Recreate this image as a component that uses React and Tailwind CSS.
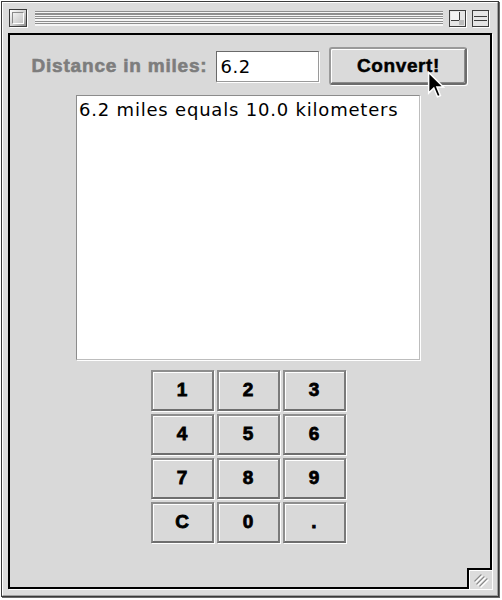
import React, { useState } from "react";

const bold = { fontFamily: '"Liberation Sans", Arial, sans-serif' };

function CloseBox() {
  return (
    <div className="shrink-0 w-[18px] h-[18px] border border-[#3c3c3c] bg-[linear-gradient(135deg,#ffffff,#cfcfcf_55%,#8f8f8f)] shadow-[1px_1px_0_#ffffff] p-[2px]">
      <div className="w-full h-full border border-t-[#8a8a8a] border-l-[#8a8a8a] border-r-white border-b-white bg-[linear-gradient(135deg,#f2f2f2,#c4c4c4)]" />
    </div>
  );
}

function ZoomBox() {
  return (
    <div className="shrink-0 w-[17px] h-[17px] border border-[#3c3c3c] bg-[#e6e6e6] shadow-[1px_1px_0_#ffffff] relative">
      <div className="absolute left-[1px] top-[1px] w-[9px] h-[9px] border-r border-b border-[#3c3c3c] bg-[#f4f4f4]" />
      <div className="absolute right-[1px] bottom-[1px] w-[5px] h-[5px] bg-[#bcbcbc]" />
    </div>
  );
}

function CollapseBox() {
  return (
    <div className="shrink-0 w-[17px] h-[17px] border border-[#3c3c3c] bg-[#e6e6e6] shadow-[1px_1px_0_#ffffff] flex flex-col justify-center gap-[3px] px-[1px]">
      <div className="h-[1px] bg-[#3c3c3c]" />
      <div className="h-[1px] bg-[#3c3c3c]" />
    </div>
  );
}

function Key({ label, onPress }) {
  return (
    <button
      onClick={() => onPress(label)}
      className="w-[63px] h-[41px] bg-[#d9d9d9] border-2 border-t-[#8e8e8e] border-l-[#8e8e8e] border-r-[#7a7a7a] border-b-[#6e6e6e] shadow-[inset_1px_1px_0_#ffffff,1px_1px_0_#ffffff] flex items-center justify-center text-[19px] font-bold text-black [-webkit-text-stroke:0.8px_#000]"
      style={bold}
    >
      {label}
    </button>
  );
}

export default function App() {
  const [miles, setMiles] = useState("6.2");
  const [result, setResult] = useState("6.2 miles equals 10.0 kilometers");

  const convert = () => {
    const km = (parseFloat(miles) || 0) * 1.609344;
    setResult(`${miles} miles equals ${km.toFixed(1)} kilometers`);
  };

  const press = (k) => {
    if (k === "C") setMiles("");
    else setMiles((m) => m + k);
  };

  const keys = ["1", "2", "3", "4", "5", "6", "7", "8", "9", "C", "0", "."];

  return (
    <div className="w-[502px] h-[600px] bg-white p-[1px]">
      {/* window frame */}
      <div className="w-[498px] h-[596px] border border-[#3a3a3a] shadow-[1px_1px_0_#6a6a6a] bg-[#dcdcdc]">
        <div className="w-full h-full border border-t-white border-l-white border-r-[#a0a0a0] border-b-[#a0a0a0] flex flex-col px-[5px] pb-[6px]">
          {/* title bar */}
          <div className="h-[30px] flex items-center shrink-0 pl-[1px] pr-[3px]">
            <CloseBox />
            <div className="flex-1 h-[15px] ml-[8px] mr-[6px] bg-[repeating-linear-gradient(to_bottom,#8e8e8e_0px,#8e8e8e_1px,#f6f6f6_1px,#f6f6f6_2.5px)]" />
            <ZoomBox />
            <div className="w-[6px] shrink-0" />
            <CollapseBox />
          </div>

          {/* content */}
          <div className="flex-1 relative border-2 border-black bg-[#d9d9d9] shadow-[1px_1px_0_#ffffff] flex flex-col items-center">
            <div className="flex items-center mt-[12px] ml-[-1px]">
              <span
                className="text-[19px] font-bold text-[#7d7d7d] tracking-[0.8px] [-webkit-text-stroke:0.6px_#7d7d7d]"
                style={bold}
              >
                Distance in miles:
              </span>
              <input
                value={miles}
                onChange={(e) => setMiles(e.target.value)}
                className="ml-[9px] w-[103px] h-[31px] bg-white border border-t-[#6a6a6a] border-l-[#6a6a6a] border-r-[#9a9a9a] border-b-[#9a9a9a] shadow-[1px_1px_0_#ffffff] px-[3px] text-[18px] text-black outline-none tracking-[0.6px]"
                style={{ fontFamily: '"DejaVu Sans", Verdana, sans-serif' }}
              />
              <button
                onClick={convert}
                className="ml-[10px] w-[138px] h-[38px] rounded-[3px] border-2 border-t-[#9a9a9a] border-l-[#9a9a9a] border-r-[#6c6c6c] border-b-[#6c6c6c] bg-[#dadada] shadow-[inset_1px_1px_0_#ffffff,inset_-1px_-1px_0_#8a8a8a,1px_1px_0_#ffffff] flex items-center justify-center text-[19px] font-bold text-black tracking-[0.6px] [-webkit-text-stroke:0.5px_#000]"
                style={bold}
              >
                Convert!
              </button>
            </div>

            <div
              className="mt-[10px] ml-[-4px] w-[344px] h-[265px] bg-white border border-t-[#8c8c8c] border-l-[#8c8c8c] border-r-[#bdbdbd] border-b-[#bdbdbd] shadow-[1px_1px_0_#ffffff] px-[2px] pt-[3px] text-[18px] leading-[22px] text-black tracking-[0.8px]"
              style={{ fontFamily: '"DejaVu Sans", Verdana, sans-serif' }}
            >
              {result}
            </div>

            <div className="mt-[10px] ml-[-4px] grid grid-cols-[63px_63px_63px] gap-x-[3px] gap-y-[3px]">
              {keys.map((k) => (
                <Key key={k} label={k} onPress={press} />
              ))}
            </div>

            {/* resize box */}
            <div className="absolute right-[-2px] bottom-[-2px] w-[25px] h-[21px] border-t-2 border-l-2 border-black bg-[#dcdcdc] shadow-[inset_1px_1px_0_#ffffff] flex items-center justify-center">
              <svg width="18" height="16" viewBox="0 0 18 16">
                <g strokeWidth="1.5" strokeLinecap="round">
                  <line x1="3" y1="9" x2="9" y2="3" stroke="#8a8a8a" />
                  <line x1="4" y1="10" x2="10" y2="4" stroke="#ffffff" />
                  <line x1="5" y1="12" x2="12" y2="5" stroke="#8a8a8a" />
                  <line x1="6" y1="13" x2="13" y2="6" stroke="#ffffff" />
                  <line x1="8" y1="14" x2="15" y2="7" stroke="#8a8a8a" />
                  <line x1="9" y1="15" x2="16" y2="8" stroke="#ffffff" />
                </g>
              </svg>
            </div>

            {/* mouse pointer over the button */}
            <svg
              className="absolute left-[417px] top-[36px] pointer-events-none"
              width="18"
              height="28"
              viewBox="0 0 12 19"
            >
              <path
                d="M1 1 L1 15 L4.5 11.5 L7 17.5 L9 16.7 L6.6 10.8 L11 10.8 Z"
                fill="#000"
                stroke="#fff"
                strokeWidth="1"
                strokeLinejoin="miter"
              />
            </svg>
          </div>
        </div>
      </div>
    </div>
  );
}
